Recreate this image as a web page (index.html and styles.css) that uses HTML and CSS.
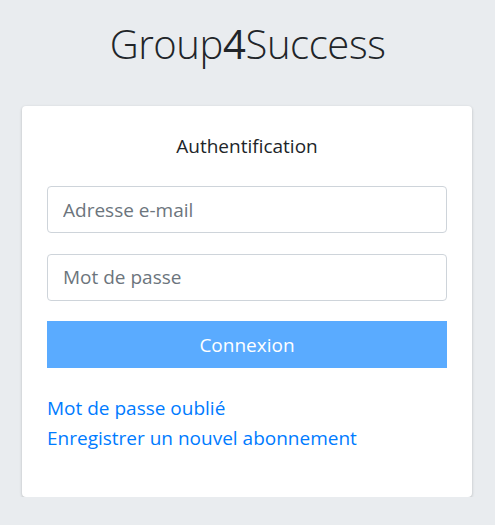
FILE: index.html
```html
<!DOCTYPE html>
<html lang="fr">
<head>
<meta charset="utf-8">
<title>Group4Success</title>
<link rel="stylesheet" href="styles.css">
</head>
<body>
<div class="page">
  <h1 class="brand">Group<b>4</b>Success</h1>
  <div class="card">
    <h2 class="card-title">Authentification</h2>
    <form class="form">
      <input class="field" type="email" placeholder="Adresse e-mail">
      <input class="field" type="password" placeholder="Mot de passe">
      <button class="btn" type="button">Connexion</button>
    </form>
    <div class="links">
      <a href="#">Mot de passe oublié</a>
      <a href="#">Enregistrer un nouvel abonnement</a>
    </div>
  </div>
</div>
</body>
</html>
```
FILE: styles.css
```css
html, body {
  margin: 0;
  padding: 0;
  background: #e9ecef;
  font-family: "Open Sans", "Noto Sans", sans-serif;
  color: #212529;
}
.page {
  padding: 16px 22px 0 22px;
  display: flex;
  flex-direction: column;
  align-items: center;
}
.brand {
  margin: 0;
  font-weight: 300;
  font-size: 40px;
  line-height: 56px;
  letter-spacing: -0.4px;
  color: #212529;
}
.brand b {
  font-weight: 500;
}
.card {
  align-self: flex-start;
  margin-top: 34px;
  width: 450px;
  box-sizing: border-box;
  background: #fff;
  border-radius: 4px;
  box-shadow: 0 1px 3px rgba(0,0,0,0.22);
  padding: 26px 25px 44px 25px;
}
.card-title {
  margin: 0;
  text-align: center;
  font-weight: 400;
  font-size: 19px;
  line-height: 28px;
}
.form {
  margin-top: 26px;
  display: flex;
  flex-direction: column;
  gap: 20.5px;
}
.field {
  height: 47px;
  box-sizing: border-box;
  border: 1px solid #ced4da;
  border-radius: 4px;
  padding: 0 15px;
  font-family: inherit;
  font-size: 19px;
  color: #495057;
  outline: none;
}
.field::placeholder {
  color: #6c757d;
}
.btn {
  height: 47px;
  border: none;
  border-radius: 0;
  background: #5aabff;
  color: #fff;
  font-family: inherit;
  font-size: 19px;
}
.links {
  margin-top: 25px;
  display: flex;
  flex-direction: column;
  align-items: flex-start;
}
.links a {
  color: #007bff;
  text-decoration: none;
  font-size: 19px;
  line-height: 30px;
}
```
